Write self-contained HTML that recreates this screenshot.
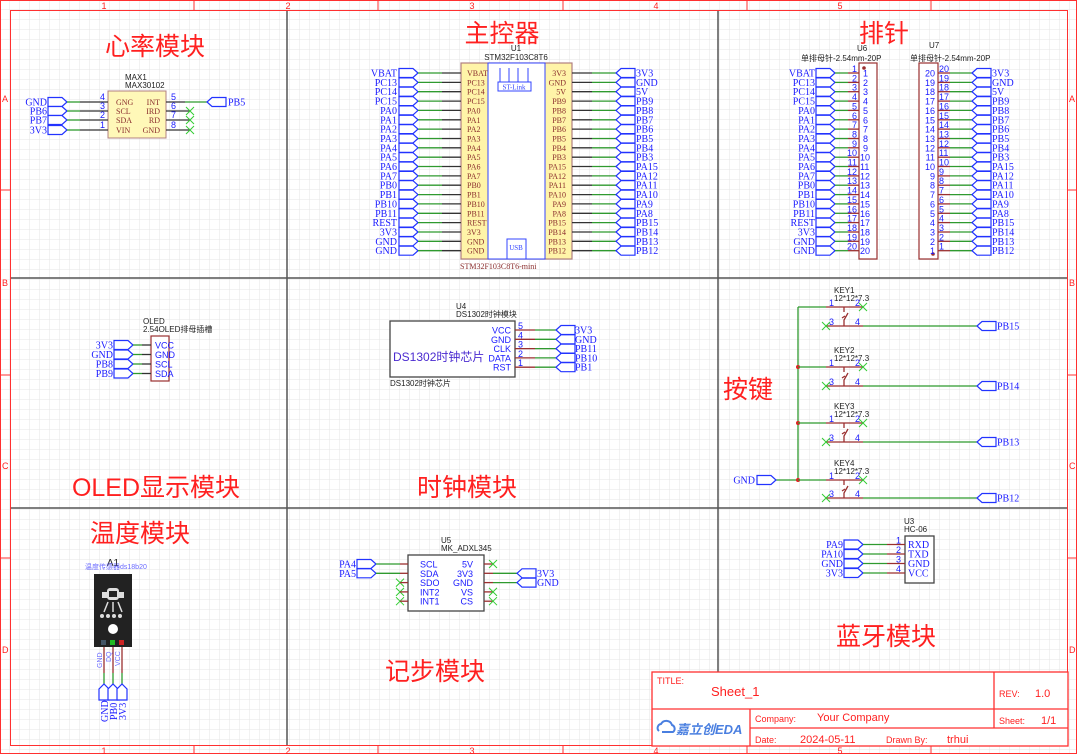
<!DOCTYPE html>
<html><head><meta charset="utf-8"><style>
html,body{margin:0;padding:0;background:#fff}
svg{display:block}
.lt{font:10px "Liberation Serif","Noto Serif CJK SC",serif;fill:#1a1aff}
.e{text-anchor:end}
.m{text-anchor:middle}
.pn{font:8px "Liberation Serif",serif;fill:#8a2d2d}
.pb{font:9px "Liberation Sans",sans-serif;fill:#1a1aff}
.sn{font:9px "Liberation Sans",sans-serif;fill:#1a1aff}
.cl{font:8px "Liberation Sans","Noto Sans CJK SC",sans-serif;fill:#222}
.ti{font:25px "Liberation Sans","Noto Sans CJK SC",sans-serif;fill:#ff2020}
.w{stroke:#2f9a2f;stroke-width:1.3;fill:none}
.k{stroke:#333;stroke-width:1.3;fill:none}
.r{stroke:#9a2f2f;stroke-width:1.3;fill:none}
.x{stroke:#3c3;stroke-width:1;fill:none}
.tb{font:11px "Liberation Sans",sans-serif;fill:#ff2020}
.fr{font:9px "Liberation Sans",sans-serif;fill:#ff2020}
</style></head><body>
<svg width="1077" height="754" viewBox="0 0 1077 754" xmlns="http://www.w3.org/2000/svg">
<defs>
<pattern id="g" width="10" height="10" patternUnits="userSpaceOnUse" x="0" y="0"><path d="M10 0V10M0 10H10" stroke="#e6e6e6" stroke-width="1" fill="none"/></pattern>
<path id="fr" d="M0 -4.5H14L19 0L14 4.5H0Z" fill="#fff" stroke="#2233ff" stroke-width="1.2"/>
<path id="fl" d="M0 0L5 -4.5H19V4.5H5Z" fill="#fff" stroke="#2233ff" stroke-width="1.2"/>
<path id="xx" d="M-4 -4L4 4M-4 4L4 -4" stroke="#3c3" stroke-width="1" fill="none"/>
</defs>
<rect width="1077" height="754" fill="url(#g)"/>
<rect x="0.5" y="0.5" width="1076" height="753" fill="none" stroke="#ff3030"/>
<rect x="10.5" y="10.5" width="1057" height="735" fill="none" stroke="#ff3030"/>
<g stroke="#ff3030"><path d="M194 0V10M378 0V10M563 0V10M747 0V10M931 0V10M194 745V754M378 745V754M563 745V754M747 745V754M931 745V754M0 190H10M0 375H10M0 558H10M1067 190H1077M1067 375H1077M1067 558H1077"/></g>
<g class="fr"><text x="104" y="9" class="m">1</text><text x="288" y="9" class="m">2</text><text x="472" y="9" class="m">3</text><text x="656" y="9" class="m">4</text><text x="840" y="9" class="m">5</text>
<text x="104" y="754" class="m">1</text><text x="288" y="754" class="m">2</text><text x="472" y="754" class="m">3</text><text x="656" y="754" class="m">4</text><text x="840" y="754" class="m">5</text>
<text x="2" y="102">A</text><text x="2" y="286">B</text><text x="2" y="469">C</text><text x="2" y="653">D</text>
<text x="1069" y="102">A</text><text x="1069" y="286">B</text><text x="1069" y="469">C</text><text x="1069" y="653">D</text></g>
<g stroke="#555" stroke-width="1.5"><path d="M287 11V745M718 11V672M11 278H1067M11 508H1067"/></g>
<text class="ti m" x="155" y="55">心率模块</text>
<text class="ti m" x="502" y="42">主控器</text>
<text class="ti m" x="884" y="42">排针</text>
<text class="ti m" x="156" y="496">OLED显示模块</text>
<text class="ti m" x="467" y="496">时钟模块</text>
<text class="ti m" x="140" y="542">温度模块</text>
<text class="ti m" x="886" y="645">蓝牙模块</text>
<text class="ti m" x="435" y="680">记步模块</text>
<text class="ti m" x="748" y="398">按键</text>

<text class="cl" x="125" y="80">MAX1</text><text class="cl" x="125" y="88">MAX30102</text>
<rect x="108" y="91" width="58" height="47" fill="#fff8b8" stroke="#b08080"/>
<g transform="translate(0,102)"><text class="lt e" x="47" y="3.5">GND</text><use href="#fr" x="48"/><path class="w" d="M67 0H80"/><path class="k" d="M80 0H108"/><text class="sn" x="100" y="-2">4</text><text class="pn" x="116" y="3">GNG</text><text class="pn e" x="160" y="3">INT</text><path class="k" d="M166 0H185"/><path class="w" d="M185 0H207"/><text class="sn" x="171" y="-2">5</text><use href="#fl" x="207"/><text class="lt" x="228" y="3.5">PB5</text></g>
<g transform="translate(0,111)"><text class="lt e" x="47" y="3.5">PB6</text><use href="#fr" x="48"/><path class="w" d="M67 0H80"/><path class="k" d="M80 0H108"/><text class="sn" x="100" y="-2">3</text><text class="pn" x="116" y="3">SCL</text><text class="pn e" x="160" y="3">IRD</text><path class="k" d="M166 0H190"/><text class="sn" x="171" y="-2">6</text><use href="#xx" x="190"/></g>
<g transform="translate(0,120)"><text class="lt e" x="47" y="3.5">PB7</text><use href="#fr" x="48"/><path class="w" d="M67 0H80"/><path class="k" d="M80 0H108"/><text class="sn" x="100" y="-2">2</text><text class="pn" x="116" y="3">SDA</text><text class="pn e" x="160" y="3">RD</text><path class="k" d="M166 0H190"/><text class="sn" x="171" y="-2">7</text><use href="#xx" x="190"/></g>
<g transform="translate(0,130)"><text class="lt e" x="47" y="3.5">3V3</text><use href="#fr" x="48"/><path class="w" d="M67 0H80"/><path class="k" d="M80 0H108"/><text class="sn" x="100" y="-2">1</text><text class="pn" x="116" y="3">VIN</text><text class="pn e" x="160" y="3">GND</text><path class="k" d="M166 0H190"/><text class="sn" x="171" y="-2">8</text><use href="#xx" x="190"/></g>

<text class="cl m" x="516" y="51">U1</text><text class="cl m" x="516" y="60">STM32F103C8T6</text>
<rect x="461" y="63" width="111" height="196" fill="#fff4a8" stroke="#b08080" stroke-width="1.2"/>
<rect x="488" y="63" width="57" height="196" fill="#fff" stroke="#3344ff"/>
<path d="M500 68V83M509 68V83M518 68V83M528 68V83" stroke="#3344ff"/>
<rect x="498" y="82" width="33" height="9" fill="#fff" stroke="#3344ff"/><text x="514" y="89.5" class="m" style="font:7px 'Liberation Serif',serif;fill:#3344ff">ST-Link</text>
<rect x="507" y="239" width="19" height="20" fill="#fff" stroke="#3344ff"/><text x="516" y="250" class="m" style="font:7px 'Liberation Serif',serif;fill:#3344ff">USB</text>
<text x="460" y="269" style="font:8px 'Liberation Serif',serif;fill:#8a2d2d">STM32F103C8T6-mini</text>
<g>
<g transform="translate(0,73)"><text class="lt e" x="397" y="3.5">VBAT</text><use href="#fr" x="399"/><path class="w" d="M418 0H442"/><path class="k" d="M442 0H461"/><text class="pn" x="467" y="3">VBAT</text><text class="pn e" x="566" y="3">3V3</text><path class="k" d="M572 0H592"/><path class="w" d="M592 0H616"/><use href="#fl" x="616"/><text class="lt" x="636" y="3.5">3V3</text></g>
<g transform="translate(0,82.4)"><text class="lt e" x="397" y="3.5">PC13</text><use href="#fr" x="399"/><path class="w" d="M418 0H442"/><path class="k" d="M442 0H461"/><text class="pn" x="467" y="3">PC13</text><text class="pn e" x="566" y="3">GND</text><path class="k" d="M572 0H592"/><path class="w" d="M592 0H616"/><use href="#fl" x="616"/><text class="lt" x="636" y="3.5">GND</text></g>
<g transform="translate(0,91.7)"><text class="lt e" x="397" y="3.5">PC14</text><use href="#fr" x="399"/><path class="w" d="M418 0H442"/><path class="k" d="M442 0H461"/><text class="pn" x="467" y="3">PC14</text><text class="pn e" x="566" y="3">5V</text><path class="k" d="M572 0H592"/><path class="w" d="M592 0H616"/><use href="#fl" x="616"/><text class="lt" x="636" y="3.5">5V</text></g>
<g transform="translate(0,101.1)"><text class="lt e" x="397" y="3.5">PC15</text><use href="#fr" x="399"/><path class="w" d="M418 0H442"/><path class="k" d="M442 0H461"/><text class="pn" x="467" y="3">PC15</text><text class="pn e" x="566" y="3">PB9</text><path class="k" d="M572 0H592"/><path class="w" d="M592 0H616"/><use href="#fl" x="616"/><text class="lt" x="636" y="3.5">PB9</text></g>
<g transform="translate(0,110.4)"><text class="lt e" x="397" y="3.5">PA0</text><use href="#fr" x="399"/><path class="w" d="M418 0H442"/><path class="k" d="M442 0H461"/><text class="pn" x="467" y="3">PA0</text><text class="pn e" x="566" y="3">PB8</text><path class="k" d="M572 0H592"/><path class="w" d="M592 0H616"/><use href="#fl" x="616"/><text class="lt" x="636" y="3.5">PB8</text></g>
<g transform="translate(0,119.8)"><text class="lt e" x="397" y="3.5">PA1</text><use href="#fr" x="399"/><path class="w" d="M418 0H442"/><path class="k" d="M442 0H461"/><text class="pn" x="467" y="3">PA1</text><text class="pn e" x="566" y="3">PB7</text><path class="k" d="M572 0H592"/><path class="w" d="M592 0H616"/><use href="#fl" x="616"/><text class="lt" x="636" y="3.5">PB7</text></g>
<g transform="translate(0,129.1)"><text class="lt e" x="397" y="3.5">PA2</text><use href="#fr" x="399"/><path class="w" d="M418 0H442"/><path class="k" d="M442 0H461"/><text class="pn" x="467" y="3">PA2</text><text class="pn e" x="566" y="3">PB6</text><path class="k" d="M572 0H592"/><path class="w" d="M592 0H616"/><use href="#fl" x="616"/><text class="lt" x="636" y="3.5">PB6</text></g>
<g transform="translate(0,138.5)"><text class="lt e" x="397" y="3.5">PA3</text><use href="#fr" x="399"/><path class="w" d="M418 0H442"/><path class="k" d="M442 0H461"/><text class="pn" x="467" y="3">PA3</text><text class="pn e" x="566" y="3">PB5</text><path class="k" d="M572 0H592"/><path class="w" d="M592 0H616"/><use href="#fl" x="616"/><text class="lt" x="636" y="3.5">PB5</text></g>
<g transform="translate(0,147.8)"><text class="lt e" x="397" y="3.5">PA4</text><use href="#fr" x="399"/><path class="w" d="M418 0H442"/><path class="k" d="M442 0H461"/><text class="pn" x="467" y="3">PA4</text><text class="pn e" x="566" y="3">PB4</text><path class="k" d="M572 0H592"/><path class="w" d="M592 0H616"/><use href="#fl" x="616"/><text class="lt" x="636" y="3.5">PB4</text></g>
<g transform="translate(0,157.2)"><text class="lt e" x="397" y="3.5">PA5</text><use href="#fr" x="399"/><path class="w" d="M418 0H442"/><path class="k" d="M442 0H461"/><text class="pn" x="467" y="3">PA5</text><text class="pn e" x="566" y="3">PB3</text><path class="k" d="M572 0H592"/><path class="w" d="M592 0H616"/><use href="#fl" x="616"/><text class="lt" x="636" y="3.5">PB3</text></g>
<g transform="translate(0,166.5)"><text class="lt e" x="397" y="3.5">PA6</text><use href="#fr" x="399"/><path class="w" d="M418 0H442"/><path class="k" d="M442 0H461"/><text class="pn" x="467" y="3">PA6</text><text class="pn e" x="566" y="3">PA15</text><path class="k" d="M572 0H592"/><path class="w" d="M592 0H616"/><use href="#fl" x="616"/><text class="lt" x="636" y="3.5">PA15</text></g>
<g transform="translate(0,175.9)"><text class="lt e" x="397" y="3.5">PA7</text><use href="#fr" x="399"/><path class="w" d="M418 0H442"/><path class="k" d="M442 0H461"/><text class="pn" x="467" y="3">PA7</text><text class="pn e" x="566" y="3">PA12</text><path class="k" d="M572 0H592"/><path class="w" d="M592 0H616"/><use href="#fl" x="616"/><text class="lt" x="636" y="3.5">PA12</text></g>
<g transform="translate(0,185.2)"><text class="lt e" x="397" y="3.5">PB0</text><use href="#fr" x="399"/><path class="w" d="M418 0H442"/><path class="k" d="M442 0H461"/><text class="pn" x="467" y="3">PB0</text><text class="pn e" x="566" y="3">PA11</text><path class="k" d="M572 0H592"/><path class="w" d="M592 0H616"/><use href="#fl" x="616"/><text class="lt" x="636" y="3.5">PA11</text></g>
<g transform="translate(0,194.6)"><text class="lt e" x="397" y="3.5">PB1</text><use href="#fr" x="399"/><path class="w" d="M418 0H442"/><path class="k" d="M442 0H461"/><text class="pn" x="467" y="3">PB1</text><text class="pn e" x="566" y="3">PA10</text><path class="k" d="M572 0H592"/><path class="w" d="M592 0H616"/><use href="#fl" x="616"/><text class="lt" x="636" y="3.5">PA10</text></g>
<g transform="translate(0,203.9)"><text class="lt e" x="397" y="3.5">PB10</text><use href="#fr" x="399"/><path class="w" d="M418 0H442"/><path class="k" d="M442 0H461"/><text class="pn" x="467" y="3">PB10</text><text class="pn e" x="566" y="3">PA9</text><path class="k" d="M572 0H592"/><path class="w" d="M592 0H616"/><use href="#fl" x="616"/><text class="lt" x="636" y="3.5">PA9</text></g>
<g transform="translate(0,213.3)"><text class="lt e" x="397" y="3.5">PB11</text><use href="#fr" x="399"/><path class="w" d="M418 0H442"/><path class="k" d="M442 0H461"/><text class="pn" x="467" y="3">PB11</text><text class="pn e" x="566" y="3">PA8</text><path class="k" d="M572 0H592"/><path class="w" d="M592 0H616"/><use href="#fl" x="616"/><text class="lt" x="636" y="3.5">PA8</text></g>
<g transform="translate(0,222.6)"><text class="lt e" x="397" y="3.5">REST</text><use href="#fr" x="399"/><path class="w" d="M418 0H442"/><path class="k" d="M442 0H461"/><text class="pn" x="467" y="3">REST</text><text class="pn e" x="566" y="3">PB15</text><path class="k" d="M572 0H592"/><path class="w" d="M592 0H616"/><use href="#fl" x="616"/><text class="lt" x="636" y="3.5">PB15</text></g>
<g transform="translate(0,232)"><text class="lt e" x="397" y="3.5">3V3</text><use href="#fr" x="399"/><path class="w" d="M418 0H442"/><path class="k" d="M442 0H461"/><text class="pn" x="467" y="3">3V3</text><text class="pn e" x="566" y="3">PB14</text><path class="k" d="M572 0H592"/><path class="w" d="M592 0H616"/><use href="#fl" x="616"/><text class="lt" x="636" y="3.5">PB14</text></g>
<g transform="translate(0,241.3)"><text class="lt e" x="397" y="3.5">GND</text><use href="#fr" x="399"/><path class="w" d="M418 0H442"/><path class="k" d="M442 0H461"/><text class="pn" x="467" y="3">GND</text><text class="pn e" x="566" y="3">PB13</text><path class="k" d="M572 0H592"/><path class="w" d="M592 0H616"/><use href="#fl" x="616"/><text class="lt" x="636" y="3.5">PB13</text></g>
<g transform="translate(0,250.7)"><text class="lt e" x="397" y="3.5">GND</text><use href="#fr" x="399"/><path class="w" d="M418 0H442"/><path class="k" d="M442 0H461"/><text class="pn" x="467" y="3">GND</text><text class="pn e" x="566" y="3">PB12</text><path class="k" d="M572 0H592"/><path class="w" d="M592 0H616"/><use href="#fl" x="616"/><text class="lt" x="636" y="3.5">PB12</text></g>
</g>

<text class="cl" x="857" y="51">U6</text><text class="cl" x="801" y="61">单排母针-2.54mm-20P</text>
<text class="cl" x="929" y="48">U7</text><text class="cl" x="910" y="61">单排母针-2.54mm-20P</text>
<rect x="859" y="63" width="18" height="196" fill="#fff" stroke="#9a2f2f" stroke-width="1.2"/>
<rect x="919" y="63" width="19" height="196" fill="#fff" stroke="#9a2f2f" stroke-width="1.2"/>
<circle cx="864" cy="68" r="1.8" fill="#9a2f2f"/><circle cx="933" cy="254" r="1.8" fill="#9a2f2f"/>
<g>
<g transform="translate(0,73)"><text class="lt e" x="815" y="3.5">VBAT</text><use href="#fr" x="816"/><path class="w" d="M835 0H848"/><path class="r" d="M848 0H859"/><text class="sn e" x="857" y="-1">1</text><text class="sn" x="863" y="3.5">1</text><text class="sn e" x="935" y="3.5">20</text><text class="sn" x="939" y="-1">20</text><path class="r" d="M938 0H950"/><path class="w" d="M950 0H972"/><use href="#fl" x="972"/><text class="lt" x="992" y="3.5">3V3</text></g>
<g transform="translate(0,82.4)"><text class="lt e" x="815" y="3.5">PC13</text><use href="#fr" x="816"/><path class="w" d="M835 0H848"/><path class="r" d="M848 0H859"/><text class="sn e" x="857" y="-1">2</text><text class="sn" x="863" y="3.5">2</text><text class="sn e" x="935" y="3.5">19</text><text class="sn" x="939" y="-1">19</text><path class="r" d="M938 0H950"/><path class="w" d="M950 0H972"/><use href="#fl" x="972"/><text class="lt" x="992" y="3.5">GND</text></g>
<g transform="translate(0,91.7)"><text class="lt e" x="815" y="3.5">PC14</text><use href="#fr" x="816"/><path class="w" d="M835 0H848"/><path class="r" d="M848 0H859"/><text class="sn e" x="857" y="-1">3</text><text class="sn" x="863" y="3.5">3</text><text class="sn e" x="935" y="3.5">18</text><text class="sn" x="939" y="-1">18</text><path class="r" d="M938 0H950"/><path class="w" d="M950 0H972"/><use href="#fl" x="972"/><text class="lt" x="992" y="3.5">5V</text></g>
<g transform="translate(0,101.1)"><text class="lt e" x="815" y="3.5">PC15</text><use href="#fr" x="816"/><path class="w" d="M835 0H848"/><path class="r" d="M848 0H859"/><text class="sn e" x="857" y="-1">4</text><text class="sn" x="863" y="3.5">4</text><text class="sn e" x="935" y="3.5">17</text><text class="sn" x="939" y="-1">17</text><path class="r" d="M938 0H950"/><path class="w" d="M950 0H972"/><use href="#fl" x="972"/><text class="lt" x="992" y="3.5">PB9</text></g>
<g transform="translate(0,110.4)"><text class="lt e" x="815" y="3.5">PA0</text><use href="#fr" x="816"/><path class="w" d="M835 0H848"/><path class="r" d="M848 0H859"/><text class="sn e" x="857" y="-1">5</text><text class="sn" x="863" y="3.5">5</text><text class="sn e" x="935" y="3.5">16</text><text class="sn" x="939" y="-1">16</text><path class="r" d="M938 0H950"/><path class="w" d="M950 0H972"/><use href="#fl" x="972"/><text class="lt" x="992" y="3.5">PB8</text></g>
<g transform="translate(0,119.8)"><text class="lt e" x="815" y="3.5">PA1</text><use href="#fr" x="816"/><path class="w" d="M835 0H848"/><path class="r" d="M848 0H859"/><text class="sn e" x="857" y="-1">6</text><text class="sn" x="863" y="3.5">6</text><text class="sn e" x="935" y="3.5">15</text><text class="sn" x="939" y="-1">15</text><path class="r" d="M938 0H950"/><path class="w" d="M950 0H972"/><use href="#fl" x="972"/><text class="lt" x="992" y="3.5">PB7</text></g>
<g transform="translate(0,129.1)"><text class="lt e" x="815" y="3.5">PA2</text><use href="#fr" x="816"/><path class="w" d="M835 0H848"/><path class="r" d="M848 0H859"/><text class="sn e" x="857" y="-1">7</text><text class="sn" x="863" y="3.5">7</text><text class="sn e" x="935" y="3.5">14</text><text class="sn" x="939" y="-1">14</text><path class="r" d="M938 0H950"/><path class="w" d="M950 0H972"/><use href="#fl" x="972"/><text class="lt" x="992" y="3.5">PB6</text></g>
<g transform="translate(0,138.5)"><text class="lt e" x="815" y="3.5">PA3</text><use href="#fr" x="816"/><path class="w" d="M835 0H848"/><path class="r" d="M848 0H859"/><text class="sn e" x="857" y="-1">8</text><text class="sn" x="863" y="3.5">8</text><text class="sn e" x="935" y="3.5">13</text><text class="sn" x="939" y="-1">13</text><path class="r" d="M938 0H950"/><path class="w" d="M950 0H972"/><use href="#fl" x="972"/><text class="lt" x="992" y="3.5">PB5</text></g>
<g transform="translate(0,147.8)"><text class="lt e" x="815" y="3.5">PA4</text><use href="#fr" x="816"/><path class="w" d="M835 0H848"/><path class="r" d="M848 0H859"/><text class="sn e" x="857" y="-1">9</text><text class="sn" x="863" y="3.5">9</text><text class="sn e" x="935" y="3.5">12</text><text class="sn" x="939" y="-1">12</text><path class="r" d="M938 0H950"/><path class="w" d="M950 0H972"/><use href="#fl" x="972"/><text class="lt" x="992" y="3.5">PB4</text></g>
<g transform="translate(0,157.2)"><text class="lt e" x="815" y="3.5">PA5</text><use href="#fr" x="816"/><path class="w" d="M835 0H848"/><path class="r" d="M848 0H859"/><text class="sn e" x="857" y="-1">10</text><text class="sn" x="860" y="3.5">10</text><text class="sn e" x="935" y="3.5">11</text><text class="sn" x="939" y="-1">11</text><path class="r" d="M938 0H950"/><path class="w" d="M950 0H972"/><use href="#fl" x="972"/><text class="lt" x="992" y="3.5">PB3</text></g>
<g transform="translate(0,166.5)"><text class="lt e" x="815" y="3.5">PA6</text><use href="#fr" x="816"/><path class="w" d="M835 0H848"/><path class="r" d="M848 0H859"/><text class="sn e" x="857" y="-1">11</text><text class="sn" x="860" y="3.5">11</text><text class="sn e" x="935" y="3.5">10</text><text class="sn" x="939" y="-1">10</text><path class="r" d="M938 0H950"/><path class="w" d="M950 0H972"/><use href="#fl" x="972"/><text class="lt" x="992" y="3.5">PA15</text></g>
<g transform="translate(0,175.9)"><text class="lt e" x="815" y="3.5">PA7</text><use href="#fr" x="816"/><path class="w" d="M835 0H848"/><path class="r" d="M848 0H859"/><text class="sn e" x="857" y="-1">12</text><text class="sn" x="860" y="3.5">12</text><text class="sn e" x="935" y="3.5">9</text><text class="sn" x="939" y="-1">9</text><path class="r" d="M938 0H950"/><path class="w" d="M950 0H972"/><use href="#fl" x="972"/><text class="lt" x="992" y="3.5">PA12</text></g>
<g transform="translate(0,185.2)"><text class="lt e" x="815" y="3.5">PB0</text><use href="#fr" x="816"/><path class="w" d="M835 0H848"/><path class="r" d="M848 0H859"/><text class="sn e" x="857" y="-1">13</text><text class="sn" x="860" y="3.5">13</text><text class="sn e" x="935" y="3.5">8</text><text class="sn" x="939" y="-1">8</text><path class="r" d="M938 0H950"/><path class="w" d="M950 0H972"/><use href="#fl" x="972"/><text class="lt" x="992" y="3.5">PA11</text></g>
<g transform="translate(0,194.6)"><text class="lt e" x="815" y="3.5">PB1</text><use href="#fr" x="816"/><path class="w" d="M835 0H848"/><path class="r" d="M848 0H859"/><text class="sn e" x="857" y="-1">14</text><text class="sn" x="860" y="3.5">14</text><text class="sn e" x="935" y="3.5">7</text><text class="sn" x="939" y="-1">7</text><path class="r" d="M938 0H950"/><path class="w" d="M950 0H972"/><use href="#fl" x="972"/><text class="lt" x="992" y="3.5">PA10</text></g>
<g transform="translate(0,203.9)"><text class="lt e" x="815" y="3.5">PB10</text><use href="#fr" x="816"/><path class="w" d="M835 0H848"/><path class="r" d="M848 0H859"/><text class="sn e" x="857" y="-1">15</text><text class="sn" x="860" y="3.5">15</text><text class="sn e" x="935" y="3.5">6</text><text class="sn" x="939" y="-1">6</text><path class="r" d="M938 0H950"/><path class="w" d="M950 0H972"/><use href="#fl" x="972"/><text class="lt" x="992" y="3.5">PA9</text></g>
<g transform="translate(0,213.3)"><text class="lt e" x="815" y="3.5">PB11</text><use href="#fr" x="816"/><path class="w" d="M835 0H848"/><path class="r" d="M848 0H859"/><text class="sn e" x="857" y="-1">16</text><text class="sn" x="860" y="3.5">16</text><text class="sn e" x="935" y="3.5">5</text><text class="sn" x="939" y="-1">5</text><path class="r" d="M938 0H950"/><path class="w" d="M950 0H972"/><use href="#fl" x="972"/><text class="lt" x="992" y="3.5">PA8</text></g>
<g transform="translate(0,222.6)"><text class="lt e" x="815" y="3.5">REST</text><use href="#fr" x="816"/><path class="w" d="M835 0H848"/><path class="r" d="M848 0H859"/><text class="sn e" x="857" y="-1">17</text><text class="sn" x="860" y="3.5">17</text><text class="sn e" x="935" y="3.5">4</text><text class="sn" x="939" y="-1">4</text><path class="r" d="M938 0H950"/><path class="w" d="M950 0H972"/><use href="#fl" x="972"/><text class="lt" x="992" y="3.5">PB15</text></g>
<g transform="translate(0,232)"><text class="lt e" x="815" y="3.5">3V3</text><use href="#fr" x="816"/><path class="w" d="M835 0H848"/><path class="r" d="M848 0H859"/><text class="sn e" x="857" y="-1">18</text><text class="sn" x="860" y="3.5">18</text><text class="sn e" x="935" y="3.5">3</text><text class="sn" x="939" y="-1">3</text><path class="r" d="M938 0H950"/><path class="w" d="M950 0H972"/><use href="#fl" x="972"/><text class="lt" x="992" y="3.5">PB14</text></g>
<g transform="translate(0,241.3)"><text class="lt e" x="815" y="3.5">GND</text><use href="#fr" x="816"/><path class="w" d="M835 0H848"/><path class="r" d="M848 0H859"/><text class="sn e" x="857" y="-1">19</text><text class="sn" x="860" y="3.5">19</text><text class="sn e" x="935" y="3.5">2</text><text class="sn" x="939" y="-1">2</text><path class="r" d="M938 0H950"/><path class="w" d="M950 0H972"/><use href="#fl" x="972"/><text class="lt" x="992" y="3.5">PB13</text></g>
<g transform="translate(0,250.7)"><text class="lt e" x="815" y="3.5">GND</text><use href="#fr" x="816"/><path class="w" d="M835 0H848"/><path class="r" d="M848 0H859"/><text class="sn e" x="857" y="-1">20</text><text class="sn" x="860" y="3.5">20</text><text class="sn e" x="935" y="3.5">1</text><text class="sn" x="939" y="-1">1</text><path class="r" d="M938 0H950"/><path class="w" d="M950 0H972"/><use href="#fl" x="972"/><text class="lt" x="992" y="3.5">PB12</text></g>
</g>

<text class="cl" x="143" y="324">OLED</text><text class="cl" x="143" y="332">2.54OLED排母插槽</text>
<rect x="151" y="336" width="18" height="45" fill="#fff" stroke="#9a2f2f" stroke-width="1.2"/>
<g transform="translate(0,345)"><text class="lt e" x="113" y="3.5">3V3</text><use href="#fr" x="114"/><path class="w" d="M133 0H142"/><path class="k" d="M142 0H151"/><text class="sn" x="155" y="3.5">VCC</text></g>
<g transform="translate(0,354.5)"><text class="lt e" x="113" y="3.5">GND</text><use href="#fr" x="114"/><path class="w" d="M133 0H142"/><path class="k" d="M142 0H151"/><text class="sn" x="155" y="3.5">GND</text></g>
<g transform="translate(0,364)"><text class="lt e" x="113" y="3.5">PB8</text><use href="#fr" x="114"/><path class="w" d="M133 0H142"/><path class="k" d="M142 0H151"/><text class="sn" x="155" y="3.5">SCL</text></g>
<g transform="translate(0,373.5)"><text class="lt e" x="113" y="3.5">PB9</text><use href="#fr" x="114"/><path class="w" d="M133 0H142"/><path class="k" d="M142 0H151"/><text class="sn" x="155" y="3.5">SDA</text></g>

<text class="cl" x="456" y="309">U4</text><text class="cl" x="456" y="317">DS1302时钟模块</text>
<rect x="390" y="321" width="125" height="56" fill="#fff" stroke="#444" stroke-width="1.3"/>
<text x="393" y="361" style="font:12px 'Liberation Sans','Noto Sans CJK SC',sans-serif;fill:#4a2ad0">DS1302时钟芯片</text>
<text class="cl" x="390" y="386">DS1302时钟芯片</text>
<g transform="translate(0,330)"><text class="sn e" x="511" y="3.5">VCC</text><path class="r" d="M515 0H535"/><path class="w" d="M535 0H556"/><text class="sn" x="518" y="-1">5</text><use href="#fl" x="556"/><text class="lt" x="575" y="3.5">3V3</text></g>
<g transform="translate(0,339.3)"><text class="sn e" x="511" y="3.5">GND</text><path class="r" d="M515 0H535"/><path class="w" d="M535 0H556"/><text class="sn" x="518" y="-1">4</text><use href="#fl" x="556"/><text class="lt" x="575" y="3.5">GND</text></g>
<g transform="translate(0,348.6)"><text class="sn e" x="511" y="3.5">CLK</text><path class="r" d="M515 0H535"/><path class="w" d="M535 0H556"/><text class="sn" x="518" y="-1">3</text><use href="#fl" x="556"/><text class="lt" x="575" y="3.5">PB11</text></g>
<g transform="translate(0,357.9)"><text class="sn e" x="511" y="3.5">DATA</text><path class="r" d="M515 0H535"/><path class="w" d="M535 0H556"/><text class="sn" x="518" y="-1">2</text><use href="#fl" x="556"/><text class="lt" x="575" y="3.5">PB10</text></g>
<g transform="translate(0,367.2)"><text class="sn e" x="511" y="3.5">RST</text><path class="r" d="M515 0H535"/><path class="w" d="M535 0H556"/><text class="sn" x="518" y="-1">1</text><use href="#fl" x="556"/><text class="lt" x="575" y="3.5">PB1</text></g>

<path class="w" d="M798 307V480M776 480H798"/>
<use href="#fr" x="757" y="480"/><text class="lt e" x="755" y="483.5">GND</text>
<circle cx="798" cy="367" r="2" fill="#d22"/><circle cx="798" cy="423" r="2" fill="#d22"/><circle cx="798" cy="480" r="2" fill="#d22"/>
<g transform="translate(0,307)"><text class="cl" x="834" y="-14">KEY1</text><text class="cl" x="834" y="-6">12*12*7.3</text><path class="w" d="M798 0H826"/><path class="r" d="M826 0H863M826 19H863M844 0V5M844 19V13L848 6M842 11L845 9"/><text class="sn" x="829" y="-1">1</text><text class="sn" x="855" y="-1">2</text><text class="sn" x="829" y="18">3</text><text class="sn" x="855" y="18">4</text><use href="#xx" x="863"/><use href="#xx" x="826" y="19"/><path class="w" d="M863 19H977"/><use href="#fl" x="977" y="19"/><text class="lt" x="997" y="22.5">PB15</text></g>
<g transform="translate(0,367)"><text class="cl" x="834" y="-14">KEY2</text><text class="cl" x="834" y="-6">12*12*7.3</text><path class="w" d="M798 0H826"/><path class="r" d="M826 0H863M826 19H863M844 0V5M844 19V13L848 6M842 11L845 9"/><text class="sn" x="829" y="-1">1</text><text class="sn" x="855" y="-1">2</text><text class="sn" x="829" y="18">3</text><text class="sn" x="855" y="18">4</text><use href="#xx" x="863"/><use href="#xx" x="826" y="19"/><path class="w" d="M863 19H977"/><use href="#fl" x="977" y="19"/><text class="lt" x="997" y="22.5">PB14</text></g>
<g transform="translate(0,423)"><text class="cl" x="834" y="-14">KEY3</text><text class="cl" x="834" y="-6">12*12*7.3</text><path class="w" d="M798 0H826"/><path class="r" d="M826 0H863M826 19H863M844 0V5M844 19V13L848 6M842 11L845 9"/><text class="sn" x="829" y="-1">1</text><text class="sn" x="855" y="-1">2</text><text class="sn" x="829" y="18">3</text><text class="sn" x="855" y="18">4</text><use href="#xx" x="863"/><use href="#xx" x="826" y="19"/><path class="w" d="M863 19H977"/><use href="#fl" x="977" y="19"/><text class="lt" x="997" y="22.5">PB13</text></g>
<g transform="translate(0,480)"><text class="cl" x="834" y="-14">KEY4</text><text class="cl" x="834" y="-6">12*12*7.3</text><path class="w" d="M798 0H826"/><path class="r" d="M826 0H863M826 18H863M844 0V5M844 18V13L848 6M842 11L845 9"/><text class="sn" x="829" y="-1">1</text><text class="sn" x="855" y="-1">2</text><text class="sn" x="829" y="17">3</text><text class="sn" x="855" y="17">4</text><use href="#xx" x="863"/><use href="#xx" x="826" y="18"/><path class="w" d="M863 18H977"/><use href="#fl" x="977" y="18"/><text class="lt" x="997" y="21.5">PB12</text></g>

<text class="cl m" x="113" y="566" style="font-size:10px">A1</text>
<text x="85" y="569" style="font:7px 'Liberation Sans','Noto Sans CJK SC',sans-serif;fill:#6a6aff">温度传感器ds18b20</text>
<rect x="94" y="574" width="38" height="73" fill="#222"/>
<path d="M102 592H124V598H102Z" fill="#ddd"/><rect x="107" y="588" width="12" height="12" rx="3" fill="#ddd"/><rect x="109" y="591" width="8" height="6" fill="#222"/>
<path d="M108 602L104 612M113 602V612M118 602L122 612" stroke="#ddd" stroke-width="1.5" fill="none"/>
<circle cx="102" cy="616" r="2" fill="#ddd"/><circle cx="108" cy="616" r="2" fill="#ddd"/><circle cx="114" cy="616" r="2" fill="#ddd"/><circle cx="120" cy="616" r="2" fill="#ddd"/>
<circle cx="113" cy="629" r="5" fill="#fff"/>
<rect x="101" y="640" width="5" height="5" fill="#456"/><rect x="110" y="640" width="5" height="5" fill="#2b2"/><rect x="119" y="640" width="5" height="5" fill="#c22"/>
<path class="r" d="M104 647V673M113 647V673M122 647V673"/>
<path class="w" d="M104 673V684M113 673V684M122 673V684"/>
<g fill="#fff" stroke="#2233ff" stroke-width="1.2"><path d="M99 700V689L104 684L109 689V700Z"/><path d="M108 700V689L113 684L118 689V700Z"/><path d="M117 700V689L122 684L127 689V700Z"/></g>
<g style="font:7px 'Liberation Sans',sans-serif;fill:#6a6aff"><text transform="translate(102,668) rotate(-90)">GND</text><text transform="translate(111,662) rotate(-90)">DQ</text><text transform="translate(120,666) rotate(-90)">VCC</text></g>
<g class="lt"><text transform="translate(108,722) rotate(-90)">GND</text><text transform="translate(117,720) rotate(-90)">PB0</text><text transform="translate(126,720) rotate(-90)">3V3</text></g>

<text class="cl" x="441" y="543">U5</text><text class="cl" x="441" y="551">MK_ADXL345</text>
<rect x="408" y="555" width="76" height="56" fill="#fff" stroke="#444" stroke-width="1.3"/>
<g transform="translate(0,564)"><use href="#fr" x="357"/><text class="lt e" x="356" y="3.5">PA4</text><path class="w" d="M376 0H400"/><path class="r" d="M400 0H408"/><text class="sn" x="420" y="3.5">SCL</text><text class="sn e" x="473" y="3.5">5V</text><path class="r" d="M484 0H493"/><use href="#xx" x="493"/></g>
<g transform="translate(0,573.3)"><use href="#fr" x="357"/><text class="lt e" x="356" y="3.5">PA5</text><path class="w" d="M376 0H400"/><path class="r" d="M400 0H408"/><text class="sn" x="420" y="3.5">SDA</text><text class="sn e" x="473" y="3.5">3V3</text><path class="r" d="M484 0H493"/><path class="w" d="M493 0H517"/><use href="#fl" x="517"/><text class="lt" x="537" y="3.5">3V3</text></g>
<g transform="translate(0,582.6)"><use href="#xx" x="400"/><path class="r" d="M400 0H408"/><text class="sn" x="420" y="3.5">SDO</text><text class="sn e" x="473" y="3.5">GND</text><path class="r" d="M484 0H493"/><path class="w" d="M493 0H517"/><use href="#fl" x="517"/><text class="lt" x="537" y="3.5">GND</text></g>
<g transform="translate(0,591.9)"><use href="#xx" x="400"/><path class="r" d="M400 0H408"/><text class="sn" x="420" y="3.5">INT2</text><text class="sn e" x="473" y="3.5">VS</text><path class="r" d="M484 0H493"/><use href="#xx" x="493"/></g>
<g transform="translate(0,601.2)"><use href="#xx" x="400"/><path class="r" d="M400 0H408"/><text class="sn" x="420" y="3.5">INT1</text><text class="sn e" x="473" y="3.5">CS</text><path class="r" d="M484 0H493"/><use href="#xx" x="493"/></g>

<text class="cl" x="904" y="524">U3</text><text class="cl" x="904" y="532">HC-06</text>
<rect x="905" y="536" width="29" height="47" fill="#fff" stroke="#444" stroke-width="1.3"/>
<g transform="translate(0,544.5)"><text class="lt e" x="843" y="3.5">PA9</text><use href="#fr" x="844"/><path class="w" d="M863 0H887"/><path class="r" d="M887 0H905"/><text class="sn" x="896" y="-1">1</text><text class="lt" x="908" y="3.5">RXD</text></g>
<g transform="translate(0,554)"><text class="lt e" x="843" y="3.5">PA10</text><use href="#fr" x="844"/><path class="w" d="M863 0H887"/><path class="r" d="M887 0H905"/><text class="sn" x="896" y="-1">2</text><text class="lt" x="908" y="3.5">TXD</text></g>
<g transform="translate(0,563.5)"><text class="lt e" x="843" y="3.5">GND</text><use href="#fr" x="844"/><path class="w" d="M863 0H887"/><path class="r" d="M887 0H905"/><text class="sn" x="896" y="-1">3</text><text class="lt" x="908" y="3.5">GND</text></g>
<g transform="translate(0,573)"><text class="lt e" x="843" y="3.5">3V3</text><use href="#fr" x="844"/><path class="w" d="M863 0H887"/><path class="r" d="M887 0H905"/><text class="sn" x="896" y="-1">4</text><text class="lt" x="908" y="3.5">VCC</text></g>

<rect x="652" y="672" width="416" height="74" fill="#fff" stroke="#ff3030" stroke-width="1.3"/>
<path d="M652 709H1068M750 728H1068M750 709V746M994 672V728" stroke="#ff3030" stroke-width="1.3" fill="none"/>
<text class="fr" x="657" y="684">TITLE:</text>
<text class="tb" x="711" y="696" style="font-size:13px">Sheet_1</text>
<text class="fr" x="999" y="697">REV:</text><text class="tb" x="1035" y="697">1.0</text>
<text class="fr" x="755" y="722">Company:</text><text class="tb" x="817" y="721">Your Company</text>
<text class="fr" x="999" y="724">Sheet:</text><text class="tb" x="1041" y="724">1/1</text>
<text class="fr" x="755" y="743">Date:</text><text class="tb" x="800" y="743">2024-05-11</text>
<text class="fr" x="886" y="743">Drawn By:</text><text class="tb" x="947" y="743">trhui</text>
<g transform="translate(656,722)"><path d="M3 9A4 4 0 0 1 5 2A6 6 0 0 1 16 3A4 4 0 0 1 17 10H6" stroke="#4a7fe0" stroke-width="2" fill="none"/></g>
<text x="676" y="734" style="font:bold 13px 'Liberation Sans','Noto Sans CJK SC',sans-serif;fill:#4a7fe0;font-style:italic">嘉立创EDA</text>
</svg>
</body></html>
